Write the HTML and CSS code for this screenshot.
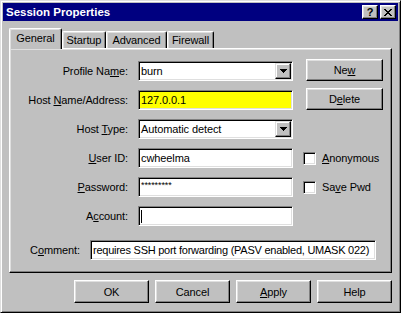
FILE: index.html
```html
<!DOCTYPE html>
<html lang="en">
<head>
  <meta charset="UTF-8">
  <title>Session Properties</title>
  <link rel="stylesheet" href="styles.css">
</head>
<body>

  <div class="window">
    <!-- Title bar -->
    <div class="titlebar">
      <span class="title">Session Properties</span>
      <div class="caption-buttons">
        <span class="cap-btn">?</span>
        <span class="cap-btn">
          <svg width="8" height="7" viewBox="0 0 8 7" shape-rendering="crispEdges">
            <path d="M0 0h2v1h-2z M6 0h2v1h-2z M1 1h2v1h-2z M5 1h2v1h-2z M2 2h4v1h-4z M3 3h2v1h-2z M2 4h4v1h-4z M1 5h2v1h-2z M5 5h2v1h-2z M0 6h2v1h-2z M6 6h2v1h-2z"/>
          </svg>
        </span>
      </div>
    </div>

    <div class="content">
      <!-- Tabs -->
      <div class="tabs">
        <div class="tab active tab-general">General</div>
        <div class="tab tab-startup">Startup</div>
        <div class="tab tab-advanced">Advanced</div>
        <div class="tab tab-firewall">Firewall</div>
      </div>

      <!-- General page -->
      <div class="panel">
        <div class="form-grid">
          <label class="lbl">Profile Na<u>m</u>e:</label>
          <div class="field combo">
            <span class="val">burn</span>
            <span class="drop">
              <svg width="7" height="4" viewBox="0 0 7 4" shape-rendering="crispEdges"><path d="M0 0h7v1h-1v1h-1v1h-1v1h-1v-1h-1v-1h-1v-1h-1z"/></svg>
            </span>
          </div>
          <div class="side-buttons">
            <button class="btn">Ne<u>w</u></button>
            <button class="btn">D<u>e</u>lete</button>
          </div>

          <label class="lbl">Host <u>N</u>ame/Address:</label>
          <div class="field highlight"><span class="val">127.0.0.1</span></div>

          <label class="lbl">Host <u>T</u>ype:</label>
          <div class="field combo">
            <span class="val">Automatic detect</span>
            <span class="drop">
              <svg width="7" height="4" viewBox="0 0 7 4" shape-rendering="crispEdges"><path d="M0 0h7v1h-1v1h-1v1h-1v1h-1v-1h-1v-1h-1v-1h-1z"/></svg>
            </span>
          </div>

          <label class="lbl"><u>U</u>ser ID:</label>
          <div class="field"><span class="val">cwheelma</span></div>
          <div class="check"><span class="check-box"></span><span><u>A</u>nonymous</span></div>

          <label class="lbl"><u>P</u>assword:</label>
          <div class="field"><span class="val pwd">*********</span></div>
          <div class="check"><span class="check-box"></span><span>Sa<u>v</u>e Pwd</span></div>

          <label class="lbl">A<u>c</u>count:</label>
          <div class="field"><span class="caret"></span></div>
        </div>

        <div class="comment-row">
          <label class="lbl comment-lbl">C<u>o</u>mment:</label>
          <div class="field comment-field"><span class="val">requires SSH port forwarding (PASV enabled, UMASK 022)</span></div>
        </div>
      </div>

      <!-- Dialog buttons -->
      <div class="footer">
        <button class="btn btn-wide">OK</button>
        <button class="btn btn-wide">Cancel</button>
        <button class="btn btn-wide"><u>A</u>pply</button>
        <button class="btn btn-wide">Help</button>
      </div>
    </div>
  </div>

</body>
</html>
```

FILE: styles.css
```css
body {
  margin: 0;
  background-color: #c0c0c0;
  font-family: "Liberation Sans", Arial, sans-serif;
  font-size: 11px;
  letter-spacing: -0.1px;
  color: #000;
}
.window {
  width: 401px;
  height: 313px;
  box-sizing: border-box;
  padding: 2px;
  border: 1px solid;
  border-color: #dfdfdf #000 #000 #dfdfdf;
  box-shadow: inset 1px 1px #fff, inset -1px -1px #808080;
}
.titlebar {
  height: 18px;
  background-color: #000080;
  display: flex;
  align-items: center;
  justify-content: space-between;
  padding: 0 2px 0 3px;
}
.title {
  color: #fff;
  font-weight: bold;
  font-size: 11.5px;
  letter-spacing: 0;
}
.caption-buttons {
  display: flex;
  gap: 2px;
}
.cap-btn {
  width: 16px;
  height: 14px;
  box-sizing: border-box;
  display: flex;
  align-items: center;
  justify-content: center;
  font-weight: bold;
  font-size: 11px;
  background-color: #c0c0c0;
  border: 1px solid;
  border-color: #fff #000 #000 #fff;
  box-shadow: inset -1px -1px #808080, inset 1px 1px #dfdfdf;
}
.content {
  padding: 7px 6px 0;
}

/* tabs */
.tabs {
  display: flex;
  align-items: flex-end;
  height: 20px;
}
.tab {
  box-sizing: border-box;
  height: 17px;
  display: flex;
  align-items: center;
  justify-content: center;
  border-left: 1px solid #fff;
  border-top: 1px solid #fff;
  border-right: 1px solid #000;
  border-top-left-radius: 2px;
  border-top-right-radius: 2px;
  box-shadow: inset -1px 0 #808080, inset 1px 1px #dfdfdf;
  background-color: #c0c0c0;
}
.tab.active {
  height: 21px;
  margin-bottom: -1px;
  position: relative;
  z-index: 1;
  padding-bottom: 2px;
}
.tab-general { width: 53px; }
.tab-startup { width: 44px; }
.tab-advanced { width: 61px; }
.tab-firewall { width: 47px; }

/* page */
.panel {
  box-sizing: border-box;
  height: 225px;
  padding-top: 12px;
  border: 1px solid;
  border-color: #fff #000 #000 #fff;
  box-shadow: inset -1px -1px #808080, inset 1px 1px #dfdfdf;
}
.form-grid {
  display: grid;
  grid-template-columns: 118px 155px 1fr;
  grid-auto-rows: 20px;
  column-gap: 10px;
  row-gap: 9px;
}
.lbl {
  grid-column: 1;
  text-align: right;
  align-self: center;
}
.field {
  grid-column: 2;
  box-sizing: border-box;
  height: 20px;
  padding: 1px;
  display: flex;
  align-items: center;
  background-color: #fff;
  border: 1px solid;
  border-color: #808080 #fff #fff #808080;
  box-shadow: inset 1px 1px #000, inset -1px -1px #dfdfdf;
}
.field.highlight {
  background-color: #ffff00;
}
.val {
  padding-left: 1px;
  white-space: nowrap;
}
.pwd {
  font-size: 9px;
  align-self: flex-start;
  margin-top: 1px;
}
.drop {
  margin-left: auto;
  width: 16px;
  height: 16px;
  box-sizing: border-box;
  display: flex;
  align-items: center;
  justify-content: center;
  background-color: #c0c0c0;
  border: 1px solid;
  border-color: #dfdfdf #000 #000 #dfdfdf;
  box-shadow: inset -1px -1px #808080, inset 1px 1px #fff;
}
.caret {
  width: 1px;
  height: 13px;
  margin-left: 1px;
  background-color: #000;
}
.side-buttons {
  grid-column: 3;
  grid-row: span 2;
  align-self: start;
  display: flex;
  flex-direction: column;
  gap: 7px;
  margin: -2px 0 0 3px;
}
.btn {
  box-sizing: border-box;
  width: 77px;
  height: 22px;
  padding: 0;
  font-family: inherit;
  font-size: 11px;
  letter-spacing: inherit;
  color: #000;
  background-color: #c0c0c0;
  border: 1px solid;
  border-color: #fff #000 #000 #fff;
  box-shadow: inset -1px -1px #808080, inset 1px 1px #dfdfdf;
}
.check {
  grid-column: 3;
  display: flex;
  align-items: center;
  gap: 6px;
}
.check-box {
  width: 13px;
  height: 13px;
  box-sizing: border-box;
  background-color: #fff;
  border: 1px solid;
  border-color: #808080 #fff #fff #808080;
  box-shadow: inset 1px 1px #000, inset -1px -1px #dfdfdf;
}
.comment-row {
  display: flex;
  align-items: center;
  gap: 10px;
  margin-top: 14px;
}
.comment-lbl {
  width: 70px;
}
.comment-field {
  width: 286px;
}
.comment-field .val {
  letter-spacing: -0.25px;
}

/* dialog buttons */
.footer {
  display: flex;
  justify-content: flex-end;
  gap: 6px;
  margin-top: 7px;
}
.btn-wide {
  width: 75px;
  height: 23px;
}
```
